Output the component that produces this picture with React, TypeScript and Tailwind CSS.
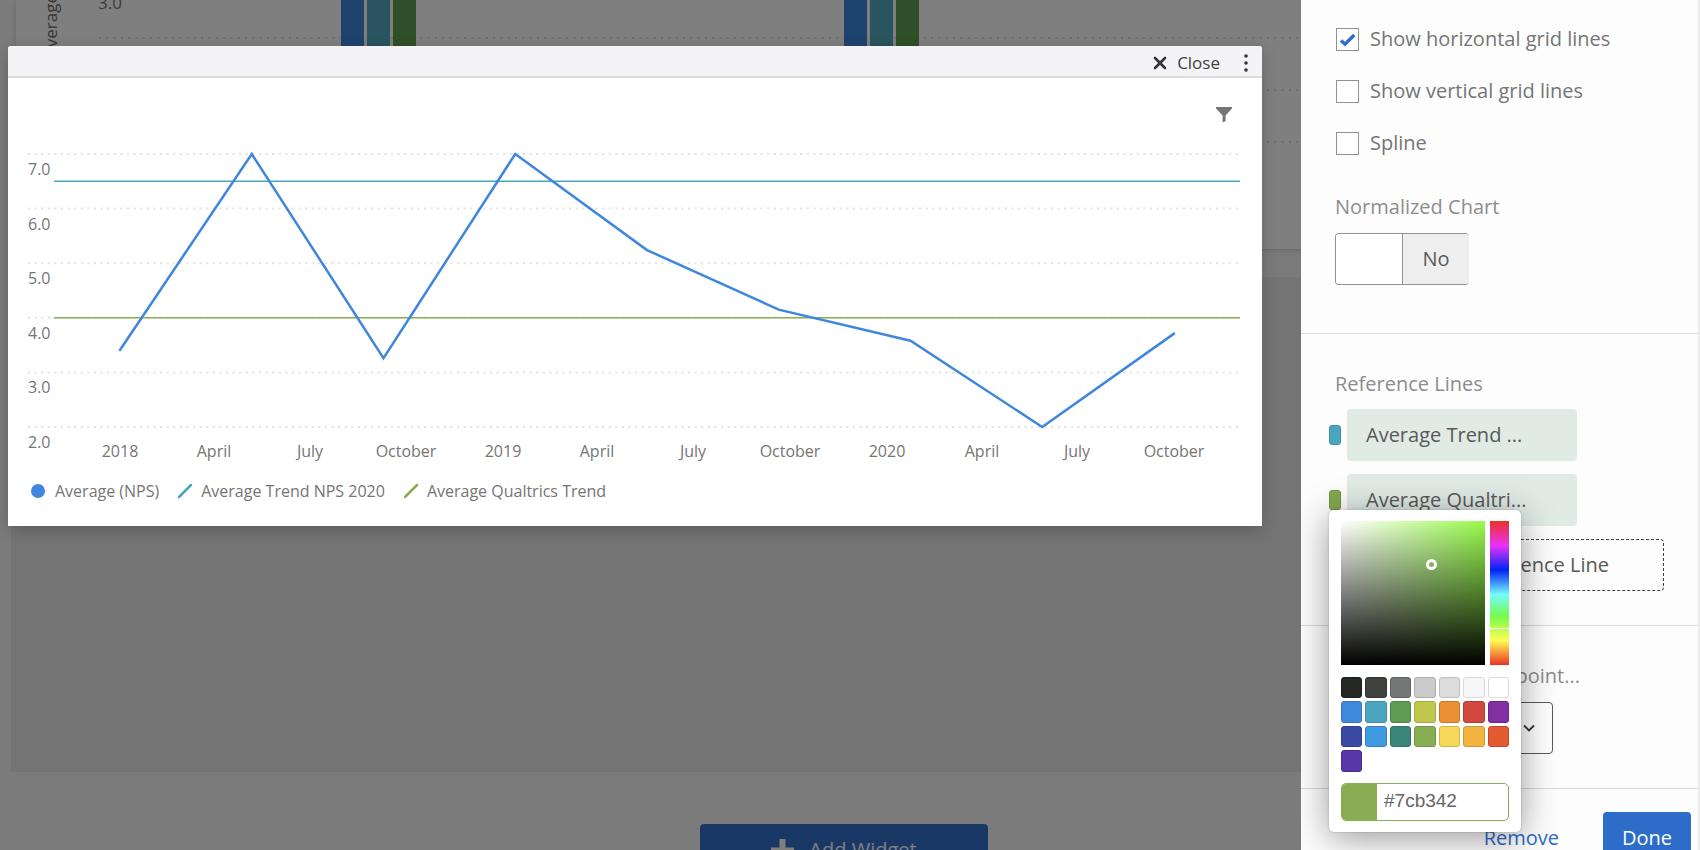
import { useState } from 'react';

const BLUE = '#3e86de';
const TEAL = '#4aa5be';
const GREEN = '#88ad52';

const swatches = [
  { name: 'Black', fill: 'bg-[#262823] border-[#1b1d19]' },
  { name: 'Charcoal', fill: 'bg-[#40423e] border-[#333531]' },
  { name: 'Gray', fill: 'bg-[#767777] border-[#5f6060]' },
  { name: 'Silver', fill: 'bg-[#c9cbca] border-[#acaead]' },
  { name: 'Light gray', fill: 'bg-[#dcdcdc] border-[#bfbfbf]' },
  { name: 'Smoke', fill: 'bg-[#f7f7f7] border-[#d9d9d9]' },
  { name: 'White', fill: 'bg-white border-[#d9d9d9]' },
  { name: 'Blue', fill: 'bg-[#4088de] border-[#3372c4]' },
  { name: 'Teal', fill: 'bg-[#4aa5be] border-[#3f8fa6]' },
  { name: 'Green', fill: 'bg-[#5e9c52] border-[#4c8542]' },
  { name: 'Lime', fill: 'bg-[#c0c850] border-[#a3aa42]' },
  { name: 'Orange', fill: 'bg-[#ec9036] border-[#cc772a]' },
  { name: 'Red', fill: 'bg-[#d3483e] border-[#b33a31]' },
  { name: 'Purple', fill: 'bg-[#822fa0] border-[#6c2587]' },
  { name: 'Indigo', fill: 'bg-[#3a4aa5] border-[#2e3b8b]' },
  { name: 'Sky', fill: 'bg-[#409ae1] border-[#3482c4]' },
  { name: 'Pine', fill: 'bg-[#3b867a] border-[#2f7166]' },
  { name: 'Olive', fill: 'bg-[#88ad52] border-[#719542]' },
  { name: 'Yellow', fill: 'bg-[#f7d858] border-[#d2b546]' },
  { name: 'Amber', fill: 'bg-[#f2b43f] border-[#cf9632]' },
  { name: 'Vermilion', fill: 'bg-[#e25b30] border-[#c04a25]' },
  { name: 'Violet', fill: 'bg-[#5838a8] border-[#472b8d]' },
];

const trend = [3.41, 7, 3.26, 7, 5.24, 4.15, 3.58, 2, 3.71];
const months = ['2018', 'April', 'July', 'October', '2019', 'April', 'July', 'October', '2020', 'April', 'July', 'October'];
const monthX = [112, 206, 302, 398, 495, 589, 685, 782, 879, 974, 1069, 1166];

const yFor = (value: number) => 76 + (7 - value) * 54.6;

const TrendChart = () => {
  const points = trend.map((v, i) => `${112 + i * 131.75},${yFor(v)}`).join(' ');

  return (
    <svg viewBox="0 0 1254 384" className="block w-full h-auto" role="img" aria-label="Average NPS trend">
      {[7, 6, 5, 4, 3, 2].map((tick) => (
        <g key={tick}>
          <line x1="20" x2="1232" y1={yFor(tick)} y2={yFor(tick)} stroke="#e2e2e2" strokeWidth="2" strokeDasharray="2 4.6" />
          <text x="20" y={yFor(tick) + 21} fontSize="16" fill="#757575">{tick.toFixed(1)}</text>
        </g>
      ))}
      <line x1="46" x2="1232" y1={yFor(6.5)} y2={yFor(6.5)} stroke={TEAL} strokeWidth="1.5" />
      <line x1="46" x2="1232" y1={yFor(4)} y2={yFor(4)} stroke={GREEN} strokeWidth="1.5" />
      <polyline points={points} fill="none" stroke={BLUE} strokeWidth="2.5" strokeLinecap="round" />
      {months.map((m, i) => (
        <text key={i} x={monthX[i]} y="379" fontSize="16" textAnchor="middle" fill="#757575">{m}</text>
      ))}
    </svg>
  );
};

const DashboardChart = () => (
  <svg viewBox="0 0 1285 249" className="block w-full h-auto" aria-hidden="true">
    {[38, 90, 142].map((y) => (
      <line key={y} x1="83" x2="1285" y1={y} y2={y} stroke="#dedede" strokeWidth="2" strokeDasharray="2 5.3" />
    ))}
    <text x="82" y="9" fontSize="17" fill="#757575">3.0</text>
    <text transform="translate(41 58) rotate(-90)" fontSize="17" fill="#6a6a6a">Average</text>
    {[325, 828].map((x) => (
      <g key={x}>
        <rect x={x} y="-10" width="23" height="152" fill={BLUE} />
        <rect x={x + 26} y="-10" width="23" height="152" fill="#50aabe" />
        <rect x={x + 52} y="-10" width="23" height="152" fill="#5e9e50" />
      </g>
    ))}
  </svg>
);

const Slash = ({ color }: { color: string }) => (
  <svg width="16" height="16" viewBox="0 0 16 16" aria-hidden="true">
    <path d="M2 14 14 2" stroke={color} strokeWidth="2.5" strokeLinecap="round" />
  </svg>
);

const ChartModal = () => (
  <div role="dialog" aria-label="Trend chart" className="absolute top-[46px] left-2 right-[39px] bg-white rounded-t-[3px] shadow-[0_4px_16px_rgba(0,0,0,0.2)]">
    <div className="h-8 flex items-center justify-end gap-[23px] pt-[4px] pr-[13px] bg-[#f4f4f7] border-b-2 border-[#dddddf] rounded-t-[3px]">
      <button className="flex items-center gap-[10px] text-[17px] leading-6 text-[#404040]">
        <svg width="14" height="14" viewBox="0 0 14 14" aria-hidden="true">
          <path d="M2 2l10 10M12 2 2 12" stroke="#333" strokeWidth="2.6" strokeLinecap="round" />
        </svg>
        Close
      </button>
      <button aria-label="More options">
        <svg width="6" height="20" viewBox="0 0 6 20" fill="#333" aria-hidden="true">
          <circle cx="3" cy="3" r="1.8" />
          <circle cx="3" cy="10" r="1.8" />
          <circle cx="3" cy="17" r="1.8" />
        </svg>
      </button>
    </div>
    <div className="relative pb-[23px]">
      <button aria-label="Filter" className="absolute top-[29px] right-[30px]">
        <svg width="16" height="16" viewBox="0 0 16 16" fill="#757575" aria-hidden="true">
          <path d="M0 0h16v1.6L9.6 8.6V14L6.6 15.6V8.6L0 1.6z" />
        </svg>
      </button>
      <TrendChart />
      <div className="flex items-center gap-[18px] pl-[23px] pt-[17px] text-base leading-6 text-[#757575]">
        <span className="flex items-center gap-[10px]">
          <span className="size-[14px] rounded-full bg-[#3e86de]" />
          Average (NPS)
        </span>
        <span className="flex items-center gap-2">
          <Slash color={TEAL} />
          Average Trend NPS 2020
        </span>
        <span className="flex items-center gap-2">
          <Slash color={GREEN} />
          Average Qualtrics Trend
        </span>
      </div>
    </div>
  </div>
);

const CheckRow = ({ label, initial = false }: { label: string; initial?: boolean }) => {
  const [checked, setChecked] = useState(initial);
  return (
    <label className="flex items-center gap-[11px] h-6 text-[#757575]">
      <span className="relative flex">
        <input
          type="checkbox"
          checked={checked}
          onChange={(e) => setChecked(e.target.checked)}
          className="appearance-none size-[23px] bg-white border border-[#8e929a]"
        />
        {checked && (
          <svg viewBox="0 0 23 23" className="absolute inset-0 pointer-events-none" aria-hidden="true">
            <path d="M5 12.5 9 16.2 18.2 7" fill="none" stroke="#2d6cc9" strokeWidth="3.4" />
          </svg>
        )}
      </span>
      {label}
    </label>
  );
};

const ColorPicker = () => {
  const [hex, setHex] = useState('#7cb342');
  return (
    <div className="absolute top-full left-0 z-10 w-[192px] px-3 py-[11px] bg-white rounded-[5px] shadow-[0_6px_36px_rgba(0,0,0,0.4),0_0_2px_rgba(0,0,0,0.25)]">
      <div className="flex justify-between h-36">
        <div className="relative w-36 bg-[linear-gradient(to_top,#000,transparent),linear-gradient(to_right,#fff,#98fa4c)]">
          <span className="absolute left-[85px] top-[38px] size-[11px] rounded-full border-3 border-white" />
        </div>
        <div className="relative w-[19px] bg-[linear-gradient(to_bottom,#ea3323,#ea33f7_17%,#0023f5_34%,#75fbfd_51%,#75fb4c_66%,#fffd54_83%,#ea3323)]">
          <span className="absolute inset-x-0 top-[107px] h-px bg-white" />
        </div>
      </div>
      <div className="grid grid-cols-7 gap-[3px] mt-3">
        {swatches.map((s) => (
          <button key={s.name} aria-label={s.name} className={`aspect-square rounded-[3px] border ${s.fill}`} />
        ))}
      </div>
      <div className="flex h-[38px] mt-[11px] border border-[#88ad52] rounded-[5px] overflow-hidden">
        <span className="w-[35px] shrink-0 bg-[#88ad52]" />
        <input
          aria-label="Hex color"
          value={hex}
          onChange={(e) => setHex(e.target.value)}
          className="w-full min-w-0 pl-[7px] pb-[2px] font-['Liberation_Sans',sans-serif] text-[19px] text-[#666] outline-none"
        />
      </div>
    </div>
  );
};

const Sidebar = () => {
  const [normalized, setNormalized] = useState(false);

  return (
    <aside className="relative w-[399px] shrink-0 bg-[#fdfdfd] border-r-2 border-[#ececec] text-[20px] leading-7 overflow-hidden">
      <section className="px-[34px] pt-[27px] pb-12 border-b border-[#d9d9d9]">
        <div className="flex flex-col gap-7 pl-px">
          <CheckRow label="Show horizontal grid lines" initial />
          <CheckRow label="Show vertical grid lines" />
          <CheckRow label="Spline" />
        </div>
        <h3 className="mt-[38px] text-[#8d8d8d]">Normalized Chart</h3>
        <button
          role="switch"
          aria-checked={normalized}
          aria-label="Normalized Chart"
          onClick={() => setNormalized(!normalized)}
          className="flex mt-[12px] w-[134px] h-[52px] border border-r-0 border-[#8e929a] rounded-[4px] overflow-hidden text-[#595959]"
        >
          <span className="w-[67px] h-full bg-white border-r border-[#8e929a]" />
          <span className="flex-1 h-full flex items-center justify-center bg-[#eee]">{normalized ? 'Yes' : 'No'}</span>
        </button>
      </section>

      <section className="pl-7 pr-[34px] pt-9 pb-[34px] border-b border-[#d9d9d9]">
        <h3 className="pl-[6px] text-[#8d8d8d]">Reference Lines</h3>
        <div className="flex flex-col gap-[13px] mt-[11px] text-[#595959]">
          <div className="flex items-center gap-[6px]">
            <button aria-label="Average Trend color" className="w-3 h-5 rounded-[3px] border border-[#3d92aa] bg-[#4aa5be]" />
            <button className="w-[230px] h-[52px] pl-[19px] rounded-[4px] bg-[#e0ebe6] text-left">Average Trend ...</button>
          </div>
          <div className="flex items-center gap-[6px]">
            <div className="relative flex">
              <button aria-label="Average Qualtrics color" className="w-3 h-5 rounded-[3px] border border-[#6f9440] bg-[#83a94e]" />
              <ColorPicker />
            </div>
            <button className="w-[230px] h-[52px] pl-[19px] rounded-[4px] bg-[#e0ebe6] text-left">Average Qualtri...</button>
          </div>
          <button className="ml-[18px] h-[52px] pr-[54px] text-right rounded-[4px] border border-dashed border-[#404040]">
            Add Reference Line
          </button>
        </div>
      </section>

      <section className="px-[34px] pt-9 pb-[34px]">
        <label htmlFor="missing" className="block w-[245px] text-right whitespace-nowrap text-[#8d8d8d]">Missing Data point...</label>
        <div className="relative mt-3 w-[218px]">
          <select id="missing" className="appearance-none block w-full h-[52px] pl-4 bg-white border border-[#595959] rounded-[4px] text-[#595959]">
            <option>Ignore</option>
          </select>
          <svg width="12" height="8" viewBox="0 0 12 8" className="absolute right-[18px] top-[22px] pointer-events-none" aria-hidden="true">
            <path d="M1 1.5 6 6.5 11 1.5" fill="none" stroke="#333" strokeWidth="1.8" />
          </svg>
        </div>
      </section>

      <footer className="flex items-center justify-end gap-[44px] pr-[7px] pt-[23px] border-t border-[#d9d9d9]">
        <button className="text-[#2d6cc9]">Remove</button>
        <button className="w-[88px] h-[52px] rounded-[4px] bg-[#2d6cc9] text-white">Done</button>
      </footer>
    </aside>
  );
};

const App = () => {
  return (
    <div className="flex h-screen overflow-hidden font-['Open_Sans',sans-serif]">
      <main className="relative flex-1 min-w-0 overflow-hidden bg-[#f6f6f6]">
        <div className="pl-[11px]">
          <div className="ml-[5px] bg-white border-b border-[#d8d8d8] shadow-[0_0_6px_rgba(0,0,0,0.15)]">
            <DashboardChart />
          </div>
          <div className="mt-[27px] h-[495px] bg-[#e8e8e8]" />
        </div>
        <div className="flex justify-center mt-[52px] pl-[387px]">
          <button className="flex items-center justify-center gap-[15px] w-[288px] h-[52px] rounded-[4px] bg-[#3470cc] text-white text-[20px]">
            <svg width="23" height="23" viewBox="0 0 23 23" aria-hidden="true">
              <path d="M11.5 0v23M0 11.5h23" stroke="#fff" strokeWidth="6" />
            </svg>
            Add Widget
          </button>
        </div>
        <div className="absolute inset-0 bg-black/50" />
        <ChartModal />
      </main>
      <Sidebar />
    </div>
  );
};

export default App;
